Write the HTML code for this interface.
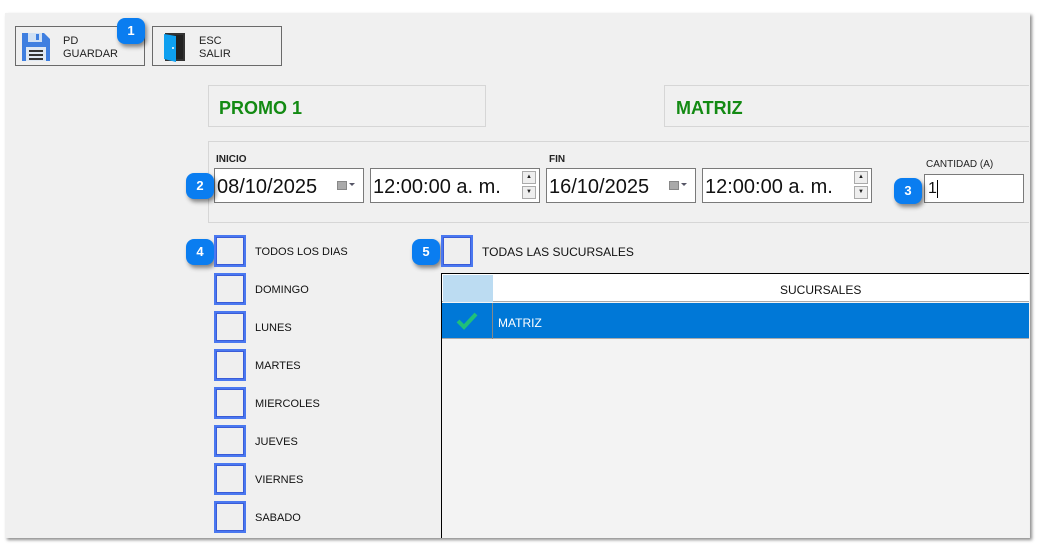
<!DOCTYPE html>
<html><head><meta charset="utf-8"><style>
*{margin:0;padding:0;box-sizing:border-box}
body{width:1037px;height:547px;background:#fff;position:relative;overflow:hidden;font-family:"Liberation Sans",sans-serif;color:#111}
.a{position:absolute}
#panel{left:5px;top:13px;width:1025px;height:525px;background:#f0f0f0;box-shadow:2px 2px 3px rgba(0,0,0,.45)}
.btn{border:1px solid #6a6a6a;background:#f0f0f0;height:40px;top:26px;font-size:11px;line-height:13px;color:#222}
.box{border:1px solid #d6d6d6;border-right:none}
.big{font-size:18px;font-weight:bold;color:#138a13}
.lbl{font-size:10px;font-weight:bold;color:#222}
.inp{background:#fff;border:1px solid #7a7a7a;height:35px;font-size:20px;line-height:36px;padding-left:2px}
.cb{width:32px;height:32px;border:3px solid #4a78f0;background:#efefef;outline:1px solid #3a5cd8;outline-offset:-3px}
.cl{font-size:11px;color:#111}
.badge{width:28px;height:26px;background:#0a7df0;border-radius:8px;color:#fff;font-weight:bold;font-size:13px;text-align:center;line-height:26px;box-shadow:2px 3px 4px rgba(0,0,0,.45)}
.spin{width:14px;height:13px;border:1px solid #aaa;background:#eee;font-size:6px;text-align:center;line-height:11px;color:#222}
</style></head><body>
<div id="panel" class="a"></div>

<div class="a btn" style="left:15px;width:130px"></div>
<svg class="a" style="left:20px;top:30px" width="32" height="33" viewBox="0 0 32 33">
<path d="M2 3h22l6 6v22H2z" fill="#3f7fe0"/><rect x="8" y="3" width="14" height="9" fill="#cfe0f4"/><rect x="16" y="4" width="3" height="6" fill="#3f7fe0"/>
<rect x="6" y="17" width="20" height="14" fill="#dfe8f2"/><rect x="9" y="20" width="14" height="2" fill="#333"/><rect x="9" y="24" width="14" height="2" fill="#333"/><rect x="9" y="28" width="14" height="2" fill="#333"/></svg>
<div class="a" style="left:63px;top:35px;font-size:11px;line-height:13px;color:#222">PD<br>GUARDAR</div>
<div class="a badge" style="left:117px;top:18px">1</div>

<div class="a btn" style="left:152px;width:130px"></div>
<svg class="a" style="left:160px;top:30px" width="26" height="33" viewBox="0 0 26 33">
<rect x="5" y="3" width="20" height="28" fill="#333"/><rect x="7" y="5" width="16" height="24" fill="#222"/><path d="M4 4l12 2v26l-12-3z" fill="#0ea0f0"/><circle cx="13" cy="18" r="1" fill="#fff"/></svg>
<div class="a" style="left:199px;top:35px;font-size:11px;line-height:13px;color:#222">ESC<br>SALIR</div>

<div class="a box" style="left:208px;top:85px;width:278px;height:42px;border-right:1px solid #d6d6d6"></div>
<div class="a big" style="left:219px;top:98px">PROMO 1</div>
<div class="a box" style="left:664px;top:85px;width:365px;height:42px"></div>
<div class="a big" style="left:676px;top:98px">MATRIZ</div>

<div class="a box" style="left:208px;top:141px;width:821px;height:82px"></div>
<div class="a lbl" style="left:216px;top:154px">INICIO</div>
<div class="a lbl" style="left:549px;top:154px">FIN</div>
<div class="a" style="left:926px;top:159px;font-size:10px;color:#222">CANTIDAD (A)</div>

<div class="a inp" style="left:214px;top:168px;width:150px">08/10/2025</div>
<div class="a" style="left:337px;top:181px;width:10px;height:9px;background:#aaa;border:1px solid #888"></div><div class="a" style="left:349px;top:183px;border-left:3px solid transparent;border-right:3px solid transparent;border-top:3px solid #556"></div>
<div class="a inp" style="left:370px;top:168px;width:170px">12:00:00 a. m.</div>
<div class="a spin" style="left:522px;top:171px">▲</div><div class="a spin" style="left:522px;top:186px">▼</div>

<div class="a inp" style="left:546px;top:168px;width:150px">16/10/2025</div>
<div class="a" style="left:669px;top:181px;width:10px;height:9px;background:#aaa;border:1px solid #888"></div><div class="a" style="left:681px;top:183px;border-left:3px solid transparent;border-right:3px solid transparent;border-top:3px solid #556"></div>
<div class="a inp" style="left:702px;top:168px;width:170px">12:00:00 a. m.</div>
<div class="a spin" style="left:854px;top:171px">▲</div><div class="a spin" style="left:854px;top:186px">▼</div>

<div class="a" style="left:924px;top:174px;width:100px;height:29px;background:#fff;border:1px solid #7a7a7a;font-size:16px;line-height:27px;padding-left:3px">1<span style="display:inline-block;width:1px;height:18px;background:#000;vertical-align:middle"></span></div>

<div class="a badge" style="left:186px;top:173px">2</div>
<div class="a badge" style="left:894px;top:178px">3</div>
<div class="a badge" style="left:186px;top:239px">4</div>
<div class="a badge" style="left:412px;top:239px">5</div>

<div class="a cb" style="left:214px;top:235px"></div><div class="a cl" style="left:255px;top:246px">TODOS LOS DIAS</div>
<div class="a cb" style="left:214px;top:273px"></div><div class="a cl" style="left:255px;top:284px">DOMINGO</div>
<div class="a cb" style="left:214px;top:311px"></div><div class="a cl" style="left:255px;top:322px">LUNES</div>
<div class="a cb" style="left:214px;top:349px"></div><div class="a cl" style="left:255px;top:360px">MARTES</div>
<div class="a cb" style="left:214px;top:387px"></div><div class="a cl" style="left:255px;top:398px">MIERCOLES</div>
<div class="a cb" style="left:214px;top:425px"></div><div class="a cl" style="left:255px;top:436px">JUEVES</div>
<div class="a cb" style="left:214px;top:463px"></div><div class="a cl" style="left:255px;top:474px">VIERNES</div>
<div class="a cb" style="left:214px;top:501px"></div><div class="a cl" style="left:255px;top:512px">SABADO</div>

<div class="a cb" style="left:441px;top:235px"></div><div class="a" style="left:482px;top:245px;font-size:12px;color:#111">TODAS LAS SUCURSALES</div>

<div class="a" style="left:441px;top:273px;width:588px;height:265px;background:#f3f3f3;border-left:1px solid #000;border-top:1px solid #000"></div>
<div class="a" style="left:442px;top:274px;width:587px;height:28px;background:#fff;border-bottom:1px solid #aaa"></div>
<div class="a" style="left:443px;top:275px;width:50px;height:27px;background:#bcdcf2"></div>
<div class="a" style="left:780px;top:283px;font-size:12px;color:#111">SUCURSALES</div>
<div class="a" style="left:442px;top:303px;width:587px;height:36px;background:#0078d7;border-bottom:1px solid #aaa"></div>
<div class="a" style="left:492px;top:303px;width:1px;height:36px;background:#888"></div>
<svg class="a" style="left:456px;top:311px" width="22" height="20" viewBox="0 0 22 20"><path d="M2 10l6 6L20 3" stroke="#20c07a" stroke-width="4" fill="none"/></svg>
<div class="a" style="left:498px;top:316px;font-size:12px;color:#fff">MATRIZ</div>
</body></html>
